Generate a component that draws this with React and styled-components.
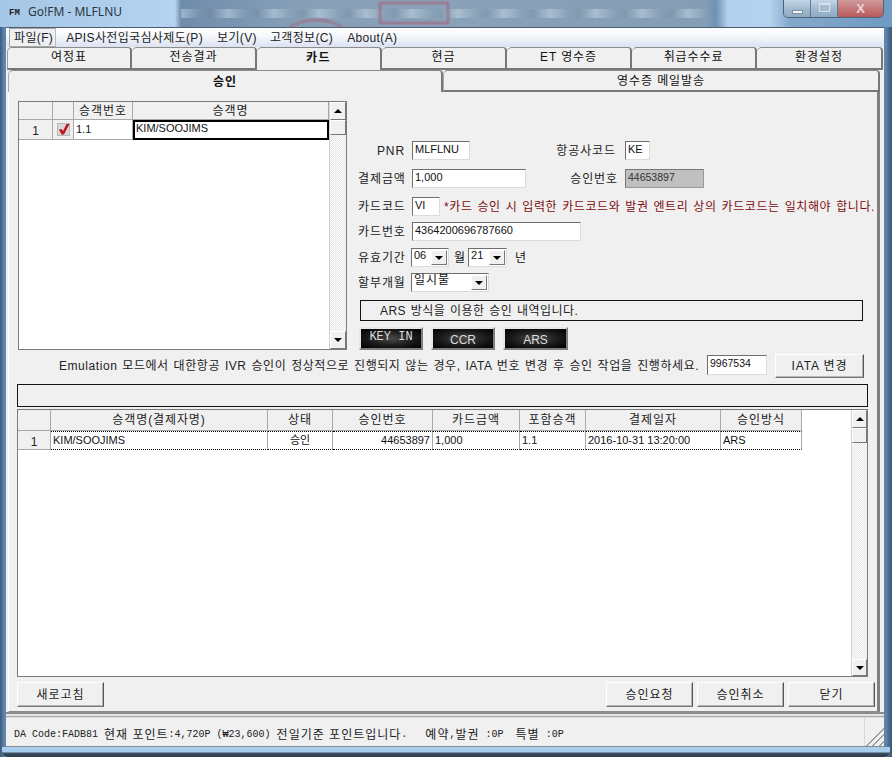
import React from "react";
import styled, { createGlobalStyle, css } from "styled-components";

const FONT = `"Liberation Sans", "Noto Sans CJK KR", sans-serif`;
const MONO = `"Liberation Mono", monospace`;

const Global = createGlobalStyle`
  html, body { margin: 0; padding: 0; background: #3f5f82; }
  * { box-sizing: border-box; }
`;

const Win = styled.div`
  width: 892px; height: 757px; overflow: hidden; display: flex; flex-direction: column;
  font: 12px/1 ${FONT}; color: #111;
  background: linear-gradient(90deg, #3d5a78 0, #5d85ad 4px, #5d85ad 886px, #3d5a78 891px);
`;
const TitleBar = styled.div`
  height: 27px; flex: none; display: flex; align-items: flex-start; position: relative; overflow: hidden;
  background:
    repeating-linear-gradient(90deg, rgba(205,220,232,.5) 0, rgba(205,220,232,.05) 18px, rgba(100,122,145,.2) 30px, rgba(205,220,232,.45) 46px) 181px 9px / 534px 9px no-repeat,
    linear-gradient(90deg, #a5c6e6 0, #b5d3f1 175px, #6f8cab 181px, #86a0b8 300px, #8aa2b9 450px, #849eb6 705px, #7092b6 716px, #b2d0ee 728px, #b5d2ee 770px, #84a8cc 790px, #6f9ac2 892px);
`;
const BlurFrame = styled.div`
  position: absolute; left: 379px; top: 2px; width: 70px; height: 22px;
  border: 2px solid #a2687f; filter: blur(1px);
`;
const BlurArc = styled.div`
  position: absolute; left: 286px; top: 19px; width: 60px; height: 30px;
  border: 2px solid #a2687f; border-radius: 50%; filter: blur(1px);
`;
const AppMark = styled.span`
  font: bold 9px/1 ${MONO}; margin: 9px 0 0 9px; width: 19px; color: #222; position: relative;
`;
const AppTitle = styled.span`
  font: 12px/1 "Noto Sans", sans-serif; color: #2b3640; margin-top: 6px; position: relative;
`;
const Controls = styled.div`
  margin-left: auto; margin-right: 8px; display: flex; height: 18px; position: relative;
  border: 1px solid #4d6478; border-top: 0; border-radius: 0 0 5px 5px; overflow: hidden;
`;
const Ctl = styled.div`
  height: 100%; width: ${p => p.$w}px; display: flex; align-items: center; justify-content: center;
  border-left: ${p => (p.$first ? 0 : "1px solid #5f7a92")};
  background: ${p => p.$close
    ? "linear-gradient(180deg, #cf9a9c, #c4787a 50%, #b95a5c)"
    : "linear-gradient(180deg, #c4d6e6, #a3bbd0 50%, #8ea9c2)"};
  color: #ecd3d3; font: bold 13px/1 ${FONT};
`;
const MinGlyph = styled.i`
  display: block; width: 11px; height: 4px; background: #f4f7fa; border: 1px solid #7f8f9e; margin-top: 7px;
`;
const MaxGlyph = styled.i`
  display: block; width: 11px; height: 9px; border: 1px solid #d6e1eb; border-top-width: 2px; background: #a5bbd0; margin-bottom: 2px;
`;

const Client = styled.div`
  height: 720px; flex: none; margin: 0 8px 0 6px; background: #f0f0f0;
  display: flex; flex-direction: column; border-top: 1px solid #4a5d70;
`;
const MenuBar = styled.div`
  height: 19px; flex: none; display: flex; align-items: center; padding-left: 3px; white-space: nowrap;
  background: linear-gradient(180deg, #ffffff 0, #f6f8fc 40%, #dbe2f0 100%);
`;
const MenuItem = styled.span`
  height: 19px; display: flex; align-items: center; margin-left: ${p => p.$ml || 0}px; font-size: 12px; color: #222; letter-spacing: .35px;
  ${p => p.$open && css`
    background: #eef0f4; border: 1px solid #a5a5a5; border-right-color: #bbb; border-radius: 1px;
    padding: 0 2px 0 4px;
  `}
`;
const MainTabs = styled.div`
  height: 23px; flex: none; display: flex; padding-left: 1px; background: #f0f0f0;
`;
const MainTab = styled.div`
  width: ${p => p.$w || 125}px; height: 23px; display: flex; align-items: center; justify-content: center;
  background: #f0f0f0; font-size: 12px; letter-spacing: ${p => (p.$on ? "1.4px" : ".9px")}; font-weight: ${p => (p.$on ? 700 : 400)}; padding-bottom: 3px;
  border-top: 1px solid #8c8c8c; border-right: 2px solid #777;
  border-bottom: ${p => (p.$on ? "0" : "2px solid #777")};
  border-left: ${p => (p.$first ? "1px solid #999" : 0)};
  border-radius: 5px 4px 0 0;
`;
const InnerTabs = styled.div`
  height: 22px; flex: none; display: flex; padding-left: 2px; padding-right: 4px;
`;
const InnerTab = styled.div`
  flex: ${p => (p.$on ? "0 0 435px" : "1")}; display: flex; align-items: center; justify-content: center; font-size: 12px;
  font-weight: ${p => (p.$on ? 700 : 400)}; letter-spacing: .9px;
  border-top: 1px solid #8c8c8c; border-left: 1px solid #aaa;
  border-right: 2px solid #777; border-bottom: ${p => (p.$on ? 0 : "2px solid #777")};
  border-radius: 5px 4px 0 0;
`;
const Panel = styled.div`
  height: 620px; flex: none; margin: 0 4px 0 2px; padding: 0 10px 0 8px; position: relative;
  border-left: 1px solid #fff; border-right: 3px solid #808080; border-bottom: 1px solid #8c8c8c;
  display: flex; flex-direction: column;
`;
const Top = styled.div`
  height: 262px; flex: none; display: flex;
`;
const Sunken = css`
  background: #fff; border: 1px solid #6e6e6e; border-right-color: #dcdcdc; border-bottom-color: #dcdcdc;
`;
const PaxGrid = styled.div`
  width: 329px; height: 249px; margin-top: 9px; margin-left: 1px; flex: none; display: flex;
  background: #fff; border: 1px solid #7a7a7a;
`;
const GridBody = styled.div`
  flex: 1; min-width: 0;
`;
const PaxRow = styled.div`
  display: grid; grid-template-columns: 34px 21px 59px 1fr; height: ${p => p.$h}px;
`;
const Head = styled.div`
  background: #f0f0f0; border-right: 1px solid #a8a8a8; border-bottom: 1px solid #a8a8a8; letter-spacing: .9px;
  display: flex; align-items: center; justify-content: center; font-size: 12px; color: #222; overflow: hidden; white-space: nowrap;
`;
const Cell = styled.div`
  display: flex; align-items: center; font-size: 11px; padding: 0 2px; background: #fff; white-space: nowrap; overflow: hidden;
  justify-content: ${p => p.$align || "flex-start"};
  border-right: 1px solid #a8a8a8; border-bottom: 1px solid #a8a8a8;
`;
const SelCell = styled(Cell)`
  border: 2px solid #000; padding: 0 1px 3px;
`;
const Scroll = styled.div`
  width: ${p => p.$w || 17}px; flex: none; display: flex; flex-direction: column;
  border-left: 1px solid #d0d0d0;
  background: repeating-conic-gradient(#e4e4e4 0 25%, #fff 0 50%) 0 0 / 2px 2px;
`;
const ScrollBtn = styled.div`
  height: ${p => p.$h || 18}px; flex: none; background: #f0f0f0; display: flex; align-items: center; justify-content: center;
  border-top: 1px solid #fff; border-left: 1px solid #fff; border-right: 1px solid #777; border-bottom: 1px solid #777;
`;
const Spring = styled.div` flex: 1; `;
const Up = styled.i`
  width: 0; height: 0; border: 4px solid transparent; border-top: 0; border-bottom: 4px solid #000;
`;
const Down = styled.i`
  width: 0; height: 0; border: 4px solid transparent; border-bottom: 0; border-top: 4px solid #000;
`;
const Form = styled.div`
  margin-left: 11px; width: 510px; padding-top: 49px; flex: none; display: flex; flex-direction: column;
`;
const Row = styled.div`
  height: 19px; margin-top: ${p => p.$mt || 0}px; flex: none; display: grid; align-items: center;
  grid-template-columns: 47px 131px 68px auto; column-gap: 7px; white-space: nowrap;
`;
const Label = styled.span`
  text-align: right; font-size: 12px; color: #222; letter-spacing: .9px; padding-right: ${p => p.$pr || 0}px; white-space: nowrap;
`;
const Field = styled.div`
  ${Sunken}; width: ${p => p.$w}px; height: 19px; font-size: 11px; padding: 0 0 0 2px; line-height: 14px; overflow: hidden;
  ${p => p.$gray && css`background: #c0c0c0; border-color: #777 #999 #999 #777; font-size: 10.5px; color: #333;`}
`;
const Wide = styled.div`
  grid-column: 2 / -1; display: flex; align-items: center;
`;
const Warn = styled.span`
  color: #7d0c10; font-size: 12px; margin-left: 4px; letter-spacing: .6px; word-spacing: 1px;
`;
const Sel = styled.div`
  ${Sunken}; width: ${p => p.$w}px; height: 19px; margin-left: -1px; display: flex; align-items: stretch; font-size: 11px;
`;
const SelVal = styled.span`
  flex: 1; padding: 0 0 0 2px; line-height: 13px; font-size: ${p => p.$fs || 11}px; letter-spacing: ${p => (p.$fs ? ".9px" : 0)};
`;
const SelBtn = styled(ScrollBtn)`
  width: 16px; height: auto; margin: 1px;
`;
const Unit = styled.span`
  margin: 0 ${p => p.$mr ?? 4}px 0 ${p => p.$ml ?? 5}px; font-size: 12px;
`;
const Notice = styled.div`
  height: 21px; width: 503px; margin-left: 2px; margin-top: 8px; flex: none; border: 1px solid #111; display: flex; align-items: center;
  padding-left: 19px; font-size: 12px; color: #222; letter-spacing: .45px; word-spacing: 1px;
`;
const Dark = styled.div`
  display: flex; gap: 8px; margin: 6px 0 0 1px; height: 23px; flex: none;
`;
const DarkBtn = styled.div`
  width: ${p => p.$w || 64}px; display: flex; align-items: center; justify-content: center;
  color: #ddd; font-size: 12px; padding-top: ${p => p.$pt || 0}px; padding-bottom: ${p => p.$pb || 0}px;
  background: radial-gradient(ellipse at center, #4a4a4a 0, #1a1a1a 55%, #000 100%);
  border: 2px solid; border-color: #e6e6e6 #7d7d7d #7d7d7d #e6e6e6;
  font-family: ${p => (p.$mono ? MONO : FONT)};
`;
const Emu = styled.div`
  height: 24px; flex: none; display: flex; align-items: center; padding-left: 42px; white-space: nowrap;
`;
const EmuText = styled.span`
  width: 648px; font-size: 12px; color: #222; letter-spacing: .56px; word-spacing: 1px;
`;
const IataInput = styled(Field)`
  height: 20px; margin-bottom: 2px; font-size: 10.5px;
`;
const Btn = styled.div`
  width: ${p => p.$w || 87}px; height: ${p => p.$h || 25}px; flex: none; display: flex; align-items: center; justify-content: center;
  margin-left: ${p => p.$ml || 0}px; background: #f0f0f0; font-size: 12px; color: #222; letter-spacing: .9px;
  border: 1px solid; border-color: #fff #555 #777 #fff;
  box-shadow: inset -1px -1px 0 #b5b5b5;
`;
const Blank = styled.div`
  height: 23px; width: 851px; margin-top: 6px; flex: none; border: 1px solid #111;
`;
const Table = styled.div`
  height: 268px; width: 851px; margin-top: 2px; flex: none; display: flex; background: #fff; border: 1px solid #7a7a7a;
`;
const TRow = styled.div`
  display: grid; grid-template-columns: 33px 217px 65px 100px 87px 66px 135px 81px; height: ${p => p.$h}px; width: 784px;
`;
const TCell = styled(Cell)`
  border-top: 1px dotted #000; border-bottom: 1px dotted #000; padding: 0 2px;
`;
const Num = styled(Head)`
  padding-top: 3px; font-size: 12px; letter-spacing: 0;
`;
const Tail = styled.div`
  height: 25px; flex: none; margin-top: 5px; display: flex;
`;
const DoubleRule = styled.div`
  height: 5px; flex: none; border-top: 2px solid #8c8c8c; border-bottom: 1px solid #a8a8a8; background: #e4e4e4;
`;
const Status = styled.div`
  flex: 1; display: flex; align-items: center; padding: 5px 0 0 8px; position: relative; white-space: pre;
  border-top: 1px solid #dcdcdc; border-bottom: 1px solid #8a8a8a; font-size: 12px; color: #222; letter-spacing: 1px;
`;
const Mono = styled.span`
  font: 10px/1 ${MONO}; letter-spacing: 0;
`;
const Grip = styled.div`
  position: absolute; right: 0; top: 0; bottom: 0; width: 20px; border-left: 1px solid #d8d8d8;
  background: linear-gradient(135deg, transparent 60%, #a0a0a0 60%, #a0a0a0 64%, transparent 64%, transparent 74%, #a0a0a0 74%, #a0a0a0 78%, transparent 78%, transparent 88%, #a0a0a0 88%, #a0a0a0 92%, transparent 92%);
`;
const Sill = styled.div`
  flex: 1; margin: 0 2px; border-radius: 0 0 6px 6px;
  background: linear-gradient(180deg, #a9cdec 0, #a9cdec 50%, #3f4f60 60%, #2c3a48 100%);
`;

const CheckIcon = () => (
  <svg width="13" height="13" viewBox="0 0 13 13">
    <rect x="0.5" y="0.5" width="12" height="12" fill="#d8d8d8" stroke="#b8b8b8" />
    <path d="M2 6.5 L4.5 6 L6 8 L9.5 1 L12.5 1 L7 11.5 L4.5 11.5 Z" fill="#c4161c" />
  </svg>
);

const tabs = ["여정표", "전송결과", "카드", "현금", "ET 영수증", "취급수수료", "환경설정"];
const headers = ["승객명(결제자명)", "상태", "승인번호", "카드금액", "포함승객", "결제일자", "승인방식"];

export default function App() {
  return (
    <Win>
      <Global />
      <TitleBar>
        <BlurFrame />
        <BlurArc />
        <AppMark>FM</AppMark>
        <AppTitle>Go!FM - MLFLNU</AppTitle>
        <Controls>
          <Ctl $w={26} $first><MinGlyph /></Ctl>
          <Ctl $w={27}><MaxGlyph /></Ctl>
          <Ctl $w={46} $close>X</Ctl>
        </Controls>
      </TitleBar>
      <Client>
        <MenuBar>
          <MenuItem $open>파일(F)</MenuItem>
          <MenuItem $ml={10}>APIS사전입국심사제도(P)</MenuItem>
          <MenuItem $ml={14}>보기(V)</MenuItem>
          <MenuItem $ml={13}>고객정보(C)</MenuItem>
          <MenuItem $ml={14}>About(A)</MenuItem>
        </MenuBar>
        <MainTabs>
          {tabs.map((t, i) => (
            <MainTab key={t} $first={i === 0} $on={i === 2} $w={i === 6 ? 126 : 125}>{t}</MainTab>
          ))}
        </MainTabs>
        <InnerTabs>
          <InnerTab $on>승인</InnerTab>
          <InnerTab>영수증 메일발송</InnerTab>
        </InnerTabs>
        <Panel>
          <Top>
            <PaxGrid>
              <GridBody>
                <PaxRow $h={18}>
                  <Head /><Head /><Head>승객번호</Head><Head>승객명</Head>
                </PaxRow>
                <PaxRow $h={20}>
                  <Num>1</Num>
                  <Head><CheckIcon /></Head>
                  <Cell>1.1</Cell>
                  <SelCell>KIM/SOOJIMS</SelCell>
                </PaxRow>
              </GridBody>
              <Scroll>
                <ScrollBtn><Up /></ScrollBtn>
                <ScrollBtn $h={15} />
                <Spring />
                <ScrollBtn><Down /></ScrollBtn>
              </Scroll>
            </PaxGrid>
            <Form>
              <Row>
                <Label>PNR</Label>
                <Field $w={58}>MLFLNU</Field>
                <Label $pr={2}>항공사코드</Label>
                <Field $w={25}>KE</Field>
              </Row>
              <Row $mt={9}>
                <Label>결제금액</Label>
                <Field $w={114}>1,000</Field>
                <Label>승인번호</Label>
                <Field $w={79} $gray>44653897</Field>
              </Row>
              <Row $mt={9}>
                <Label>카드코드</Label>
                <Wide>
                  <Field $w={28}>VI</Field>
                  <Warn>*카드 승인 시 입력한 카드코드와 발권 엔트리 상의 카드코드는 일치해야 합니다.</Warn>
                </Wide>
              </Row>
              <Row $mt={6}>
                <Label>카드번호</Label>
                <Wide><Field $w={169}>4364200696787660</Field></Wide>
              </Row>
              <Row $mt={7}>
                <Label>유효기간</Label>
                <Wide>
                  <Sel $w={38}><SelVal>06</SelVal><SelBtn><Down /></SelBtn></Sel>
                  <Unit>월</Unit>
                  <Sel $w={39}><SelVal>21</SelVal><SelBtn><Down /></SelBtn></Sel>
                  <Unit $ml={8}>년</Unit>
                </Wide>
              </Row>
              <Row $mt={6}>
                <Label>할부개월</Label>
                <Wide>
                  <Sel $w={78}><SelVal $fs={12}>일시불</SelVal><SelBtn><Down /></SelBtn></Sel>
                </Wide>
              </Row>
              <Notice>ARS 방식을 이용한 승인 내역입니다.</Notice>
              <Dark>
                <DarkBtn $mono $pb={3}>KEY IN</DarkBtn>
                <DarkBtn $pt={2}>CCR</DarkBtn>
                <DarkBtn $w={65} $pt={2}>ARS</DarkBtn>
              </Dark>
            </Form>
          </Top>
          <Emu>
            <EmuText>Emulation 모드에서 대한항공 IVR 승인이 정상적으로 진행되지 않는 경우, IATA 번호 변경 후 승인 작업을 진행하세요.</EmuText>
            <IataInput $w={60}>9967534</IataInput>
            <Btn $w={89} $h={24} $ml={8}>IATA 변경</Btn>
          </Emu>
          <Blank />
          <Table>
            <GridBody>
              <TRow $h={21}>
                <Head />
                {headers.map(h => <Head key={h}>{h}</Head>)}
              </TRow>
              <TRow $h={19}>
                <Num>1</Num>
                <TCell>KIM/SOOJIMS</TCell>
                <TCell $align="center">승인</TCell>
                <TCell $align="flex-end">44653897</TCell>
                <TCell>1,000</TCell>
                <TCell>1.1</TCell>
                <TCell>2016-10-31 13:20:00</TCell>
                <TCell>ARS</TCell>
              </TRow>
            </GridBody>
            <Scroll $w={16}>
              <ScrollBtn><Up /></ScrollBtn>
              <ScrollBtn $h={15} />
              <Spring />
              <ScrollBtn $h={17}><Down /></ScrollBtn>
            </Scroll>
          </Table>
          <Tail>
            <Btn $w={87}>새로고침</Btn>
            <Btn $ml={502}>승인요청</Btn>
            <Btn $ml={4}>승인취소</Btn>
            <Btn $ml={4}>닫기</Btn>
          </Tail>
        </Panel>
        <DoubleRule />
        <Status>
          <Mono>DA Code:FADB81 </Mono>현재 포인트<Mono>:4,720P (₩23,600) </Mono>전일기준 포인트입니다<Mono>.   </Mono>예약<Mono>,</Mono>발권<Mono> :0P  </Mono>특별<Mono> :0P</Mono>
          <Grip />
        </Status>
      </Client>
      <Sill />
    </Win>
  );
}
